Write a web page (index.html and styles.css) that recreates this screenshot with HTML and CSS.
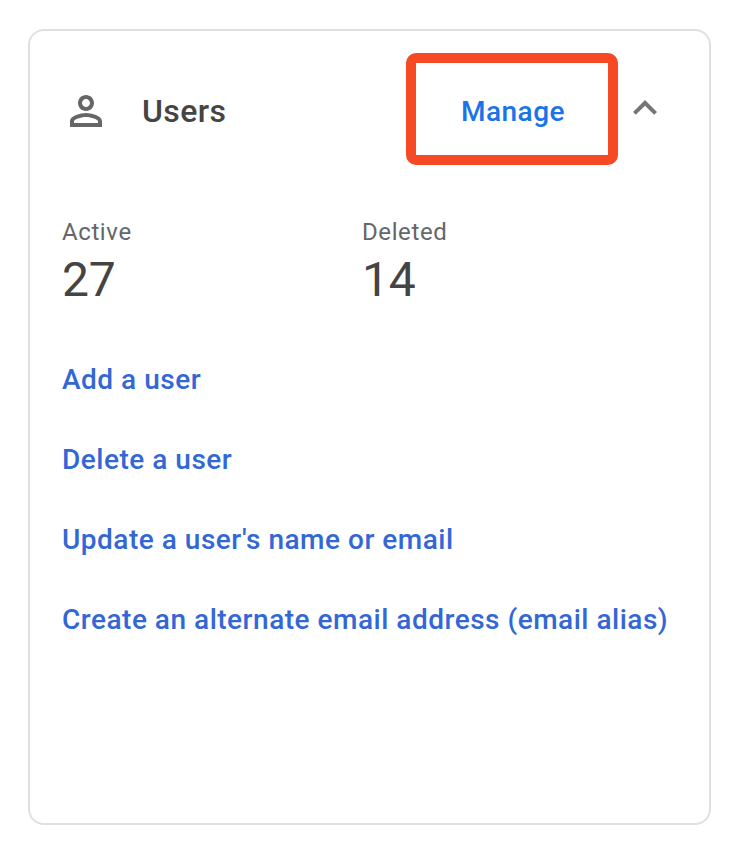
FILE: index.html
```html
<!DOCTYPE html>
<html lang="en">
<head>
<meta charset="utf-8">
<title>Users</title>
<link rel="stylesheet" href="styles.css">
</head>
<body>
<section class="card">
  <header class="card-header">
    <svg class="user-icon" viewBox="0 0 24 24" width="48" height="48" fill="#666"><path d="M12 6c1.1 0 2 .9 2 2s-.9 2-2 2-2-.9-2-2 .9-2 2-2m0 9c2.7 0 5.8 1.29 6 2v1H6v-.99c.2-.72 3.3-2.01 6-2.01m0-11C9.79 4 8 5.79 8 8s1.79 4 4 4 4-1.79 4-4-1.79-4-4-4zm0 9c-2.67 0-8 1.34-8 4v3h16v-3c0-2.66-5.33-4-8-4z"/></svg>
    <h1 class="title">Users</h1>
    <a class="manage">Manage</a>
    <svg class="chevron" viewBox="0 0 24 24" width="48" height="48" fill="#757575"><path d="M12 8l-6 6 1.41 1.41L12 10.83l4.59 4.58L18 14z"/></svg>
  </header>
  <div class="stats">
    <div class="stat"><div class="label">Active</div><div class="value">27</div></div>
    <div class="stat"><div class="label">Deleted</div><div class="value">14</div></div>
  </div>
  <nav class="links">
    <a>Add a user</a>
    <a>Delete a user</a>
    <a>Update a user's name or email</a>
    <a>Create an alternate email address (email alias)</a>
  </nav>
</section>
</body>
</html>
```
FILE: styles.css
```css
* { box-sizing: border-box; }
body { margin: 0; padding: 29px 21px 29px 28px; background: #fff; font-family: Roboto, sans-serif; }
.card { width: 683px; height: 796px; border: 2px solid #e0e0e0; border-radius: 16px; padding: 22px 32px; }
.card-header { display: flex; align-items: center; height: 112px; }
.card-header > * { flex-shrink: 0; }
.user-icon { margin-top: 4px; }
.title { margin: 4px 0 0 32px; width: 264px; font-size: 32px; font-weight: 500; line-height: 40px; letter-spacing: .4px; color: #444; }
.manage { display: flex; align-items: center; justify-content: center; width: 212px; height: 112px; padding: 5px 0 0 2px; border: 10px solid #f64a25; border-radius: 10px; font-size: 28px; font-weight: 500; letter-spacing: .5px; color: #1a73e8; }
.chevron { margin: -2px 0 0 3px; }
.stats { display: flex; margin-top: 51px; }
.stat { width: 300px; }
.label { font-size: 24px; line-height: 32px; letter-spacing: .6px; color: #666; }
.value { font-size: 48px; line-height: 64px; letter-spacing: -.2px; color: #444; }
.links { display: flex; flex-direction: column; gap: 40px; margin-top: 48px; }
.links a { font-size: 28px; font-weight: 500; line-height: 40px; letter-spacing: .51px; color: #3367d6; white-space: nowrap; }
```
